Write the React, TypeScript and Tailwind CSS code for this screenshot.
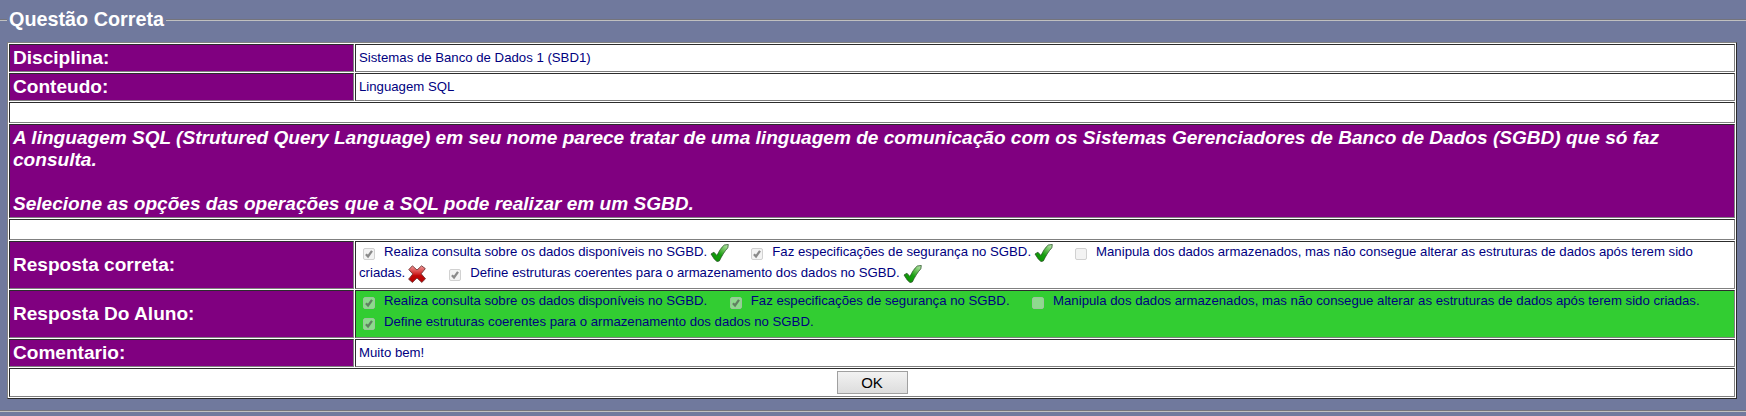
import React from "react";

const cell = "border border-t-[#2c2c2c] border-l-[#2c2c2c] border-r-[#808080] border-b-[#808080] px-[3px]";
const label = `${cell} flex w-[345px] shrink-0 items-center bg-[#800080] text-[19.07px] leading-[22px] font-bold text-white`;
const value = `${cell} min-w-0 flex-1 text-[13.2px] leading-[21px] text-[#000080]`;

function Check() {
  return (
    <svg className="ml-[3px] inline-block h-[18px] w-[19px] align-[-6px]" viewBox="0 0 19 18">
      <defs>
        <linearGradient id="green" x1="1" y1="0" x2="0.2" y2="1">
          <stop offset="0" stopColor="#c4ecb8" />
          <stop offset="0.4" stopColor="#55b845" />
          <stop offset="0.6" stopColor="#16a010" />
          <stop offset="1" stopColor="#0a9400" />
        </linearGradient>
      </defs>
      <path d="M1 10 3.9 8.2 7 11.6 C8.8 7.5 11.3 3.4 14.3 1 L18.3.5 17.8 3.8 C14.4 7.4 11.8 12 9.3 17 L7 17.5 4.4 15.2Z" fill="url(#green)" stroke="#2b5528" strokeWidth=".8" strokeLinejoin="round" />
    </svg>
  );
}

function Cross() {
  return (
    <svg className="mr-px ml-[3px] inline-block h-[18px] w-[18px] align-[-6px]" viewBox="0 0 18 18">
      <defs>
        <linearGradient id="red" x1="0" y1="0" x2="0" y2="1">
          <stop offset="0" stopColor="#f09a9a" />
          <stop offset="0.45" stopColor="#d43030" />
          <stop offset="0.6" stopColor="#c00808" />
          <stop offset="1" stopColor="#b80000" />
        </linearGradient>
      </defs>
      <path d="M.8 4.6 4.4.8 9 5 13.6.8 17.3 3.6 13.2 8.8 17.5 13.8 13.8 17.4 9 13 4.4 17.4.6 14.2 4.8 9Z" fill="url(#red)" stroke="#703838" strokeWidth=".9" strokeLinejoin="round" />
    </svg>
  );
}

function Box({ on = false }: { on?: boolean }) {
  return (
    <svg className="mr-[9px] ml-[4px] inline-block h-[12px] w-[12px] align-[-4px]" viewBox="0 0 12 12">
      <rect x=".5" y=".5" width="11" height="11" rx="1.5" fill="#e8e8e8" fillOpacity=".5" stroke="#bbb" strokeOpacity=".65" />
      {on && <path d="M2.9 6.3 5 8.4 9 2.8" fill="none" stroke="#444" strokeOpacity=".6" strokeWidth="2.3" />}
    </svg>
  );
}

export default function App() {
  return (
    <div className="h-[416px] overflow-hidden bg-[#70799d] pt-[7px] font-['Liberation_Sans',Arial,sans-serif]">
      <div className="flex h-[26px] items-center">
        <div className="h-[2px] w-[7px] border-t border-b border-t-[#74747c] border-b-[#c0c0c0]" />
        <h1 className="px-[2px] pb-[2px] text-[19.8px] leading-[24px] font-bold text-white">Questão Correta</h1>
        <div className="h-[2px] flex-1 border-t border-b border-t-[#74747c] border-b-[#c0c0c0]" />
      </div>
      <div className="mt-[9px] mr-[9px] ml-[7px] flex h-[357px] flex-col gap-px border border-t-[#808080] border-r-[#2c2c2c] border-b-[#2c2c2c] border-l-[#808080] bg-white p-px">
        <div className="flex h-[28px] gap-px">
          <div className={label}>Disciplina:</div>
          <div className={`${value} pt-[2px]`}>Sistemas de Banco de Dados 1 (SBD1)</div>
        </div>
        <div className="flex h-[28px] gap-px">
          <div className={label}>Conteudo:</div>
          <div className={`${value} pt-[2px]`}>Linguagem SQL</div>
        </div>
        <div className={`${cell} h-[21px]`} />
        <div className={`${cell} h-[94px] bg-[#800080] pt-[2px] text-[19.07px] leading-[22px] font-bold text-white italic`}>
          <p>A linguagem SQL (Strutured Query Language) em seu nome parece tratar de uma linguagem de comunicação com os Sistemas Gerenciadores de Banco de Dados (SGBD) que só faz consulta.</p>
          <p className="mt-[22px]">Selecione as opções das operações que a SQL pode realizar em um SGBD.</p>
        </div>
        <div className={`${cell} h-[21px]`} />
        <div className="flex h-[48px] gap-px">
          <div className={label}>Resposta correta:</div>
          <div className={value}>
            <div className="-mt-px">
              <Box on />Realiza consulta sobre os dados disponíveis no SGBD.<Check />
              <span className="ml-[18px]"><Box on /></span>Faz especificações de segurança no SGBD.<Check />
              <span className="ml-[18px]"><Box /></span>Manipula dos dados armazenados, mas não consegue alterar as estruturas de dados após terem sido criadas.<Cross />
              <span className="ml-[18px]"><Box on /></span>Define estruturas coerentes para o armazenamento dos dados no SGBD.<Check />
            </div>
          </div>
        </div>
        <div className="flex h-[48px] gap-px">
          <div className={label}>Resposta Do Aluno:</div>
          <div className={`${value} bg-[#32cd32]`}>
            <div className="-mt-px">
              <Box on />Realiza consulta sobre os dados disponíveis no SGBD.
              <span className="ml-[18.5px]"><Box on /></span>Faz especificações de segurança no SGBD.
              <span className="ml-[18.5px]"><Box /></span>Manipula dos dados armazenados, mas não consegue alterar as estruturas de dados após terem sido criadas.
              <br />
              <Box on />Define estruturas coerentes para o armazenamento dos dados no SGBD.
            </div>
          </div>
        </div>
        <div className="flex h-[28px] gap-px">
          <div className={label}>Comentario:</div>
          <div className={`${value} pt-[2px]`}>Muito bem!</div>
        </div>
        <div className={`${cell} flex h-[29px] items-center justify-center`}>
          <button className="h-[23px] w-[71px] border border-[#a0a0a0] bg-linear-to-b from-[#f2f2f2] to-[#dddddd] text-[15px] leading-[21px] text-black">OK</button>
        </div>
      </div>
      <div className="mt-[11px] h-[2px] border-t border-b border-t-[#74747c] border-b-[#c0c0c0]" />
    </div>
  );
}
